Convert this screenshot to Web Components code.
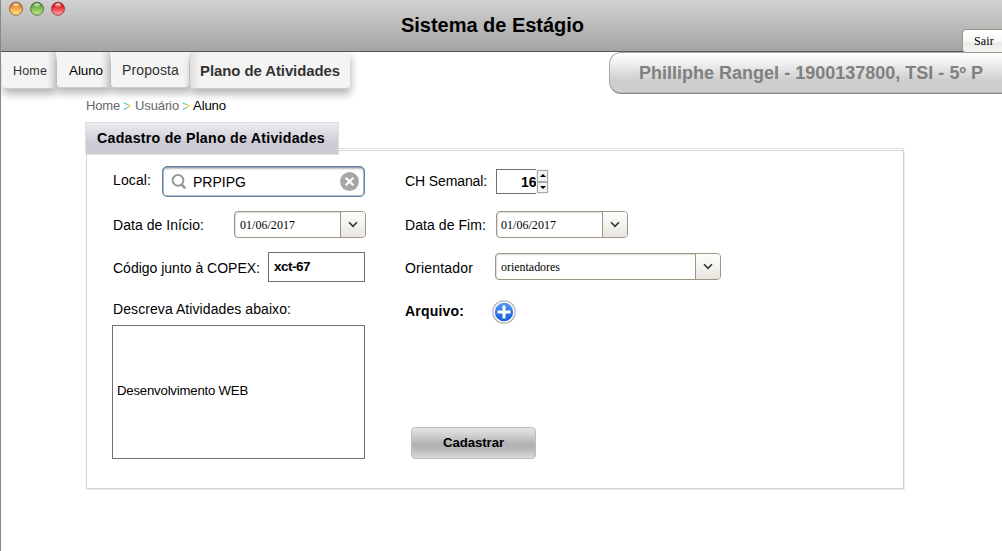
<!DOCTYPE html>
<html lang="pt-BR">
<head>
<meta charset="utf-8">
<title>Sistema de Estágio</title>
<style>
html,body{margin:0;height:100%;overflow:hidden;background:#fff;font-family:"Liberation Sans",Arial,sans-serif;color:#000}
</style>
</head>
<body>
<estagio-app></estagio-app>
<script>
const define = (name, html, init) => {
  const t = document.createElement('template');
  t.innerHTML = html;
  customElements.define(name, class extends HTMLElement {
    connectedCallback() {
      if (this.shadowRoot) return;
      this.attachShadow({mode: 'open'}).append(t.content.cloneNode(true));
      if (init) init(this, this.shadowRoot);
    }
  });
};

/* one line of text tracked to a set width */
define('ui-text', `<style>
:host{display:inline-block;white-space:pre;line-height:16px;flex:none}
span{display:inline-block}
</style><span><slot></slot></span>`, (el, root) => {
  const s = root.querySelector('span');
  el.style.fontSize = el.getAttribute('size') + 'px';
  const w = +el.getAttribute('w');
  if (w) {
    s.style.letterSpacing = ((w - s.getBoundingClientRect().width) / el.textContent.length) + 'px';
    el.style.width = w + 'px';
  }
});

define('traffic-lights', `<style>:host{display:block;width:60px;height:18px}svg{display:block}</style>
<svg width="60" height="18" viewBox="0 0 60 18">
<defs>
<linearGradient id="o" x1="0" y1="0" x2="0" y2="1"><stop offset="0" stop-color="#b85a1c"/><stop offset=".4" stop-color="#eb9a3c"/><stop offset="1" stop-color="#ffee8c"/></linearGradient>
<linearGradient id="g" x1="0" y1="0" x2="0" y2="1"><stop offset="0" stop-color="#3d7227"/><stop offset=".4" stop-color="#74b550"/><stop offset="1" stop-color="#c9f094"/></linearGradient>
<linearGradient id="r" x1="0" y1="0" x2="0" y2="1"><stop offset="0" stop-color="#a3171b"/><stop offset=".45" stop-color="#ec3438"/><stop offset="1" stop-color="#ffb5b5"/></linearGradient>
<linearGradient id="h" x1="0" y1="0" x2="0" y2="1"><stop offset="0" stop-color="#fff" stop-opacity=".95"/><stop offset="1" stop-color="#fff" stop-opacity=".1"/></linearGradient>
</defs>
<g stroke-width="1"><circle cx="8" cy="8.7" r="6.5" fill="url(#o)" stroke="#96603c"/><circle cx="29" cy="8.7" r="6.5" fill="url(#g)" stroke="#4e7a3c"/><circle cx="50" cy="8.7" r="6.5" fill="url(#r)" stroke="#a03438"/></g>
<g fill="url(#h)"><ellipse cx="8" cy="5.2" rx="2.8" ry="2"/><ellipse cx="29" cy="5.2" rx="2.8" ry="2"/><ellipse cx="50" cy="5.2" rx="2.8" ry="2"/></g>
</svg>`);

define('title-bar', `<style>
:host{display:grid;grid-template-columns:400px 1fr;height:51px;border-bottom:1px solid #555;background:linear-gradient(#d1d1d1,#a4a4a4);position:relative}
traffic-lights{margin-left:7px}
.t{padding-top:17px;font-weight:bold}
.out{position:absolute;left:961px;top:29px;width:50px;height:22px;border:1px solid #a09585;border-radius:4px;background:linear-gradient(#fff,#f8f8f8 50%,#ebebeb 60%,#f5f5f5);box-sizing:content-box;font-family:"Liberation Serif",serif;z-index:2}
.out ui-text{margin:3px 0 0 11px;display:block}
</style>
<traffic-lights></traffic-lights>
<div class="t"><ui-text size="20" w="183">Sistema de Estágio</ui-text></div>
<div class="out"><ui-text size="12" w="20">Sair</ui-text></div>`);

define('nav-tab', `<style>
:host{display:block;box-sizing:border-box;background:#f4f4f4;border-radius:0 0 4px 4px;color:#333;position:relative;border-bottom:1px solid #ccc;box-shadow:1px 5px 8px rgba(0,0,0,.3)}
</style><slot></slot>`);

define('nav-bar', `<style>
:host{display:flex;align-items:flex-start;height:46px;clip-path:inset(0 -20px -10px 0)}
nav-tab{flex:none}
.a{width:54px;height:37px;padding:9px 0 0 11px;margin:0 1px 0 1px}
.b{width:53px;height:36px;padding:9px 0 0 12px;margin-right:1px;color:#000}
.c{width:78px;height:36px;padding:9px 0 0 11px;margin-right:1px}
.d{width:160px;height:37px;padding:10px 0 0 10px;font-weight:bold}
.a,.b{background:linear-gradient(90deg,#f4f4f4 82%,#d8d8d8)}
.d{background:linear-gradient(90deg,#dedede,#f4f4f4 7%)}
</style>
<nav-tab class="a"><ui-text size="12.5" w="34">Home</ui-text></nav-tab>
<nav-tab class="b"><ui-text size="13.5" w="34">Aluno</ui-text></nav-tab>
<nav-tab class="c"><ui-text size="14" w="57">Proposta</ui-text></nav-tab>
<nav-tab class="d"><ui-text size="14.9" w="140">Plano de Atividades</ui-text></nav-tab>`);

define('user-badge', `<style>
:host{display:block;box-sizing:border-box;width:411px;height:42px;border:1px solid #aaa;border-bottom-color:#888;border-radius:12px;background:linear-gradient(#fff,#f5f5f5 18%,#cfcfcf 68%,#cecece);box-shadow:inset 0 -1px 0 #bbb;padding:12px 0 0 29px;color:#808080;font-weight:bold}
</style><ui-text size="18" w="344">Philliphe Rangel - 1900137800, TSI - 5º P</ui-text>`);

define('bread-crumb', `<style>
:host{display:flex;color:#666}
.s{margin:0 3px;background:linear-gradient(90deg,#30d0d8 30%,#aaa 42%,#aaa 58%,#e8e010 70%);-webkit-background-clip:text;color:transparent}
.n{color:#000}
</style>
<ui-text size="13" w="34">Home</ui-text><ui-text class="s" size="14" w="9">&gt;</ui-text><ui-text size="13" w="44">Usuário</ui-text><ui-text class="s" size="14" w="8">&gt;</ui-text><ui-text class="n" size="13.2" w="33">Aluno</ui-text>`);

define('search-field', `<style>
:host{display:flex;box-sizing:border-box;width:203px;height:31px;border:1.5px solid #6580a0;border-radius:5px;background:#fff;box-shadow:inset 0 0 0 .5px #6580a0,inset 0 2px 2px #bbb;align-items:center;padding:0 5px 0 8px}
ui-text{margin:1px auto 0 6px}
svg{flex:none}
</style>
<svg width="16" height="17" viewBox="0 0 16 17" fill="none" stroke="#92979c"><circle cx="7" cy="7.3" r="5.4" stroke-width="1.9"/><path d="M10.5 11.5L14.3 15.3" stroke-width="2.5"/></svg>
<ui-text size="14" w="51"><slot></slot></ui-text>
<svg width="19" height="19" viewBox="0 0 19 19"><circle cx="9.5" cy="9.5" r="9.4" fill="#a6a6a6"/><path d="M5.7 5.7l7.6 7.6M13.3 5.7l-7.6 7.6" stroke="#fff" stroke-width="2.2"/></svg>`);

define('drop-field', `<style>
:host{display:flex;box-sizing:border-box;height:27px;border:1px solid #a09585;border-radius:4px;background:#fff;overflow:hidden;font-family:"Liberation Serif",serif;box-shadow:inset 1px 1px 1px #ddd}
div{flex:1;display:flex;padding:5px 0 0 5px}
b{flex:none;width:24px;border-left:1px solid #a09585;background:linear-gradient(#fdfdfc,#f2f1ed 55%,#e7e5df);display:grid;place-items:center}
</style><div><slot></slot></div><b><svg width="10" height="7" viewBox="0 0 10 7"><path d="M1 1.3L5 5.3L9 1.3" fill="none" stroke="#333" stroke-width="1.6"/></svg></b>`);

define('box-field', `<style>:host{display:flex;box-sizing:border-box;border:1px solid #707070;background:#fff}</style><slot></slot>`);

define('number-field', `<style>
:host{display:flex;width:53px;height:25px}
.v{box-sizing:border-box;width:40px;border:1px solid #707070;border-right:0;padding:4px 0 0 24px;font-weight:bold;display:flex}
.s{width:13px;background:#f0f0f0;display:flex;flex-direction:column;box-sizing:border-box;padding:1px}
i{flex:1;border:1px solid #aaa;display:grid;place-items:center;background:#f3f3f3}
</style><div class="v"><ui-text size="14" w="15"><slot></slot></ui-text></div>
<div class="s"><i><svg width="6" height="3"><path d="M0 3L3 0L6 3z"/></svg></i><i><svg width="6" height="3"><path d="M0 0L3 3L6 0z"/></svg></i></div>`);

define('add-icon', `<style>:host{display:block;width:24px;height:24px}svg{display:block}</style>
<svg width="24" height="24" viewBox="0 0 24 24"><defs><linearGradient id="b" x1="0" y1="0" x2="0" y2="1"><stop offset="0" stop-color="#5b9af0"/><stop offset=".5" stop-color="#3279df"/><stop offset="1" stop-color="#1560d8"/></linearGradient></defs><circle cx="12" cy="12" r="11.2" fill="#fff" stroke="#b7b7b7" stroke-width="1.3"/><circle cx="12" cy="12" r="9.2" fill="url(#b)"/><path d="M12 5.5v13M5.5 12h13" stroke="#fff" stroke-width="3"/></svg>`);

define('push-button', `<style>
:host{display:flex;box-sizing:border-box;width:125px;height:32px;border:1px solid #bdbdbd;border-radius:4px;background:linear-gradient(#e6e6e6,#c5c5c5 35%,#b1b1b1 55%,#b8b8b8 70%,#dadada);font-weight:bold;padding:7px 0 0 31px}
</style><slot></slot>`);

define('plan-form', `<style>
:host{display:grid;grid-template-columns:292px 1fr;box-sizing:border-box;width:818px;height:339px;padding:15px 0 0 26px;border:1px solid #d4d4d4;box-shadow:1px 1px 0 #ebebeb}
.col{display:flex;flex-direction:column}
.row{display:flex;justify-content:space-between}
.l{width:253px;margin-left:-1px}
.l .row>ui-text{margin-left:1px}
.r .row{justify-content:flex-start}
.r .row>ui-text:first-child{width:91px!important}
</style>
<div class="col l">
 <div class="row" style="height:45px"><ui-text size="14" w="38" style="margin-top:6px">Local:</ui-text><search-field>PRPIPG</search-field></div>
 <div class="row" style="height:41px"><ui-text size="14" w="91" style="margin-top:6px">Data de Início:</ui-text><drop-field style="width:132px;margin-right:-1px"><ui-text size="12" w="55">01/06/2017</ui-text></drop-field></div>
 <div class="row" style="height:49px"><ui-text size="14" w="147" style="margin-top:8px">Código junto à COPEX:</ui-text><box-field style="width:97px;height:30px;padding:6px 0 0 5px;font-weight:bold"><ui-text size="13.5" w="36">xct-67</ui-text></box-field></div>
 <div class="row" style="height:24px"><ui-text size="14" w="178">Descreva Atividades abaixo:</ui-text></div>
 <box-field style="width:253px;height:134px;padding:57px 0 0 4px"><ui-text size="13.2" w="131">Desenvolvimento WEB</ui-text></box-field>
</div>
<div class="col r">
 <div class="row" style="height:45px"><ui-text size="14" w="82" style="margin-top:7px">CH Semanal:</ui-text><number-field style="margin-top:3px">16</number-field></div>
 <div class="row" style="height:42px"><ui-text size="14" w="81" style="margin-top:6px">Data de Fim:</ui-text><drop-field style="width:132px"><ui-text size="12" w="55" style="margin-left:-1px">01/06/2017</ui-text></drop-field></div>
 <div class="row" style="height:47px"><ui-text size="14" w="68" style="margin-top:7px">Orientador</ui-text><drop-field style="width:226px;margin-left:-1px"><ui-text size="12" w="59">orientadores</ui-text></drop-field></div>
 <div class="row" style="height:127px;font-weight:bold"><ui-text size="14" w="59" style="margin-top:3px">Arquivo:</ui-text><add-icon style="margin-left:-4px"></add-icon></div>
 <push-button style="margin-left:6px"><ui-text size="13.2" w="61">Cadastrar</ui-text></push-button>
</div>`);

define('form-section', `<style>
:host{display:block;width:818px}
.h{display:flex;align-items:flex-start;height:28px;margin-left:-1px;position:relative;z-index:1}
.tab{box-sizing:border-box;width:254px;height:33px;border:1px solid #dfdfe4;background:linear-gradient(#ececf0,#cdcbd4 65%,#cdccd3);padding:7px 0 0 11px;font-weight:bold;display:flex}
.line{width:565px;height:1px;background:#dedede;margin-top:26px}
</style><div class="h"><div class="tab"><ui-text size="14.2" w="228">Cadastro de Plano de Atividades</ui-text></div><div class="line"></div></div><plan-form></plan-form>`);

define('estagio-app', `<style>
:host{display:block;box-sizing:border-box;width:1002px;height:551px;border-left:1px solid #888;overflow:hidden;position:relative}
.top{display:flex;justify-content:space-between;height:46px;margin-right:-18px}
bread-crumb{margin:0 0 0 85px}
form-section{margin:8px 0 0 85px}
</style>
<title-bar></title-bar>
<div class="top"><nav-bar></nav-bar><user-badge></user-badge></div>
<bread-crumb></bread-crumb>
<form-section></form-section>`);
</script>
</body>
</html>
